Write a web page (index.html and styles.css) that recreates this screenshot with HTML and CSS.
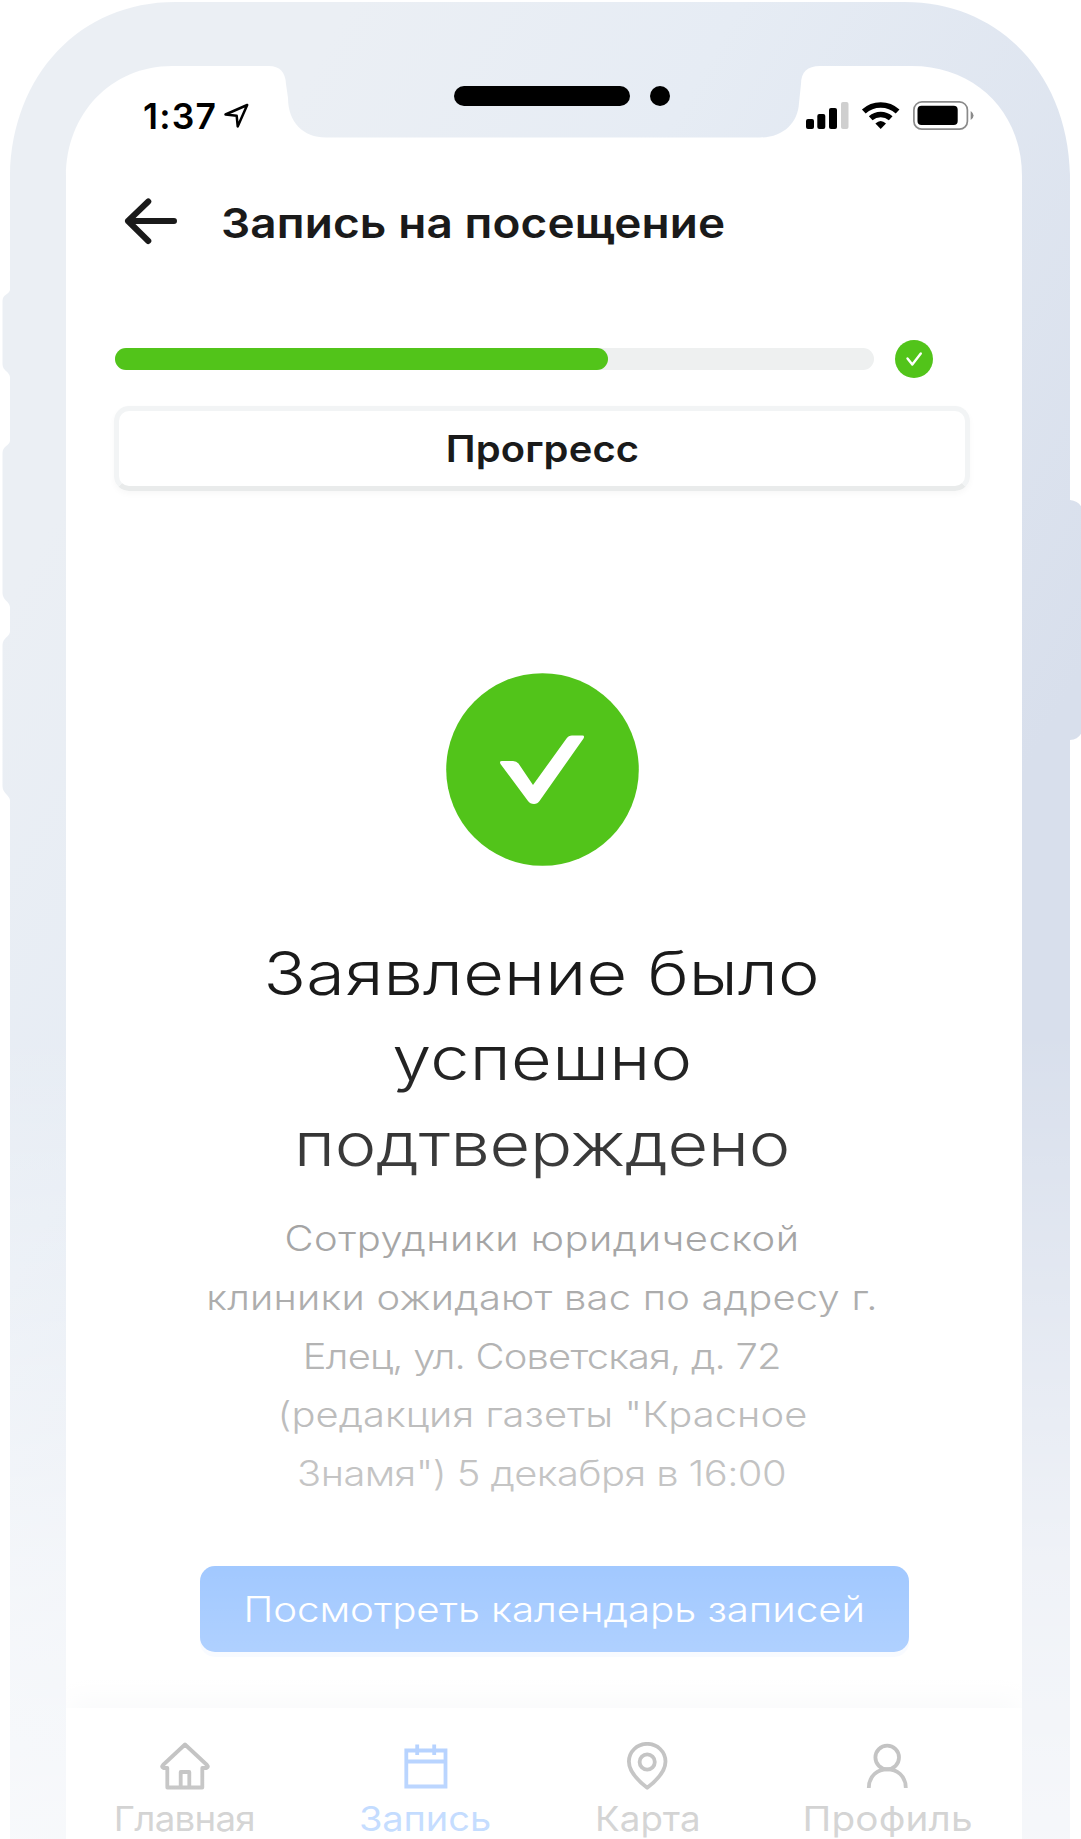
FILE: index.html
```html
<!DOCTYPE html>
<html lang="ru">
<head>
<meta charset="utf-8">
<title>Запись на посещение</title>
<link rel="stylesheet" href="styles.css">
</head>
<body>
<div class="phone">
  <svg class="frame" viewBox="0 0 1081 1839" aria-hidden="true">
    <defs>
      <linearGradient id="metal" gradientUnits="userSpaceOnUse" x1="180" y1="300" x2="1020" y2="780">
        <stop offset="0" stop-color="#ebeff4"/>
        <stop offset=".35" stop-color="#e6ecf4"/>
        <stop offset="1" stop-color="#d8dfec"/>
      </linearGradient>
    </defs>
    <path fill="url(#metal)" fill-rule="evenodd" d="M10 1839V800C9 795 2.500 793 2.500 786V645C2.500 638 9 637 10 632V607C9 601 2.500 600 2.500 593V453C2.500 446 9 446 10 441V377C9 371 2.500 371 2.500 364V301C2.500 294 9 295 10 290V175C12 75 80 2 175 2H905C1000 2 1068 75 1070 175V500Q1081 501 1083 512V728Q1081 739 1070 740V1839ZM66 1839H1022V176C1022 112 975 66 912 66H820Q801 66 801 84L799 103C798 123 783 137.500 760 137.500H326C303 137.500 288 122 288 98L286 84Q285 66 269 66H172C111 66 66 114 66 176Z"/>
    <rect x="454" y="86" width="176" height="20" rx="10"/>
    <circle cx="660" cy="96" r="10"/>
  </svg>

  <main class="screen">
    <div class="status">
      <div class="clock">
        <span class="time">1:37</span>
        <svg width="28" height="28" viewBox="222 102 28 28"><path d="M247.200 105 225.500 114.500 236.700 115.800 237.700 126.500Z" fill="none" stroke="#000" stroke-width="2.500" stroke-linejoin="round"/></svg>
      </div>
      <svg width="170" height="32" viewBox="805 100 170 32">
        <rect x="806" y="119" width="8" height="10" rx="2"/>
        <rect x="817.300" y="114" width="8" height="15" rx="2"/>
        <rect x="829" y="108" width="8" height="21" rx="2"/>
        <rect x="841" y="102" width="7.500" height="27" rx="2" fill="#cfcfcf"/>
        <path d="M863.800 111.500A25 25 0 0 1 897.600 111.500M870.700 118.300A15 15 0 0 1 890.700 118.300" fill="none" stroke="#000" stroke-width="5.500"/>
        <path d="M875.400 123.500Q880.700 118.500 886 123.500L880.700 129Z"/>
        <rect x="913.900" y="101.900" width="53.500" height="27.300" rx="8" fill="none" stroke="#8a8a8a" stroke-width="1.700"/>
        <rect x="917.500" y="105.700" width="40.200" height="19.400" rx="4"/>
        <path d="M970.700 111Q976.500 115.500 970.700 120Z" fill="#8a8a8a"/>
      </svg>
    </div>

    <header class="header">
      <svg width="54" height="50" viewBox="124 195 54 50"><path d="M174 220H128M148.300 200.500 128 220 148.300 240" fill="none" stroke="#1a1a1a" stroke-width="6" stroke-linecap="round" stroke-linejoin="round"/></svg>
      <h1 class="title"><span class="fit f-title">Запись на посещение</span></h1>
    </header>

    <div class="progress">
      <div class="track"><div class="bar" style="width:65%"></div></div>
      <svg width="38" height="38" viewBox="895 340 38 38"><circle cx="914" cy="359" r="19" fill="#52c41a"/><path d="M907.500 358.500 912.300 364.500 920.800 353.500" fill="none" stroke="#fff" stroke-width="2.400" stroke-linecap="round" stroke-linejoin="round"/></svg>
    </div>
    <div class="card"><span class="fit f-card">Прогресс</span></div>

    <svg class="success" width="193" height="193" viewBox="446 673 193 193">
      <circle cx="542.500" cy="769.500" r="96.300" fill="#52c41a"/>
      <path fill="#fff" d="M502 761H513Q516.500 761 518.500 763.500L533 785 566.500 738.500Q568.500 735.500 572 735.500H582.500Q585 735.500 583.500 738.500L539.500 801Q537.500 804 534 804 530 804 528 801L500.500 764Q499 761 502 761Z"/>
    </svg>

    <h2 class="result">
      <span class="fit f-r1">Заявление было</span><br>
      <span class="fit f-r2">успешно</span><br>
      <span class="fit f-r3">подтверждено</span>
    </h2>
    <p class="details">
      <span class="fit f-d1">Сотрудники юридической</span><br>
      <span class="fit f-d2">клиники ожидают вас по адресу г.</span><br>
      <span class="fit f-d3">Елец, ул. Советская, д. 72</span><br>
      <span class="fit f-d4">(редакция газеты "Красное</span><br>
      <span class="fit f-d5">Знамя") 5 декабря в 16:00</span>
    </p>
    <button class="action"><span class="fit f-btn">Посмотреть календарь записей</span></button>

    <nav class="tabs">
      <a class="tab t1">
        <svg width="50" height="50" viewBox="160 1742 50 50"><path d="M167.300 1768H163.500Q161 1767 163 1765L185 1744.500 207 1765Q209 1767 206.500 1768H202.300V1787.500H167.300ZM180.700 1787V1772H189.300V1787"/></svg>
        <span class="fit f-n1">Главная</span>
      </a>
      <a class="tab t2 active">
        <svg width="50" height="50" viewBox="400.500 1742 50 50"><path d="M405.800 1750.500H445V1786.500H405.800ZM405.800 1761.500H445M416.700 1744.500V1755M433.700 1744.500V1755"/></svg>
        <span class="fit f-n2">Запись</span>
      </a>
      <a class="tab t3">
        <svg width="50" height="50" viewBox="622.300 1742 50 50"><path d="M646.500 1787.800C639 1782 628.200 1773 628.200 1761.500A18.300 17.700 0 0 1 664.800 1761.500C664.800 1773 654 1782 646.500 1787.800Z"/><circle cx="646.500" cy="1762" r="7.600"/></svg>
        <span class="fit f-n3">Карта</span>
      </a>
      <a class="tab t4">
        <svg width="50" height="50" viewBox="863 1742 50 50"><circle cx="887.200" cy="1757.500" r="11.800"/><path d="M868.800 1788C868.800 1763 905.800 1763 905.800 1788"/></svg>
        <span class="fit f-n4">Профиль</span>
      </a>
    </nav>
  </main>
  <div class="fade"></div>
</div>
</body>
</html>
```
FILE: styles.css
```css
* { box-sizing: border-box; }
body { margin: 0; background: #fff; font-family: Inter, "Liberation Sans", sans-serif; color: #1a1a1a; }
h1, h2, p { margin: 0; font-weight: 300; }
svg { display: block; flex: none; }

.phone { position: relative; width: 1081px; height: 1839px; overflow: hidden; }
.frame { position: absolute; inset: 0; width: 1081px; height: 1839px; }
.fade { position: absolute; inset: 1030px 0 0; background: linear-gradient(rgba(255,255,255,0), rgba(255,255,255,.6) 66.300%, rgba(255,255,255,.66) 77%, rgba(255,255,255,.76)); pointer-events: none; }

.screen { position: relative; width: 956px; height: 1839px; margin-left: 66px; padding-top: 96px; overflow: hidden; display: flex; flex-direction: column; }
.screen > * { flex: none; }

/* extended letterforms, tracked per line */
.fit { --sx: 1.15; display: inline-block; white-space: nowrap; letter-spacing: var(--ls); margin-right: calc(-1 * var(--ls)); transform: scaleX(var(--sx)); }
.f-title { --sx: 1.12; --ls: .1px; transform-origin: left; }
.f-card { --sx: 1.08; --ls: .1px; }
.f-r1 { --sx: 1.17; --ls: .2px; }
.f-r2 { --sx: 1.17; --ls: .3px; }
.f-r3 { --sx: 1.17; --ls: -.2px; }
.f-d1 { --ls: .45px; }
.f-d2 { --ls: .2px; }
.f-d3 { --ls: -.7px; }
.f-d4 { --ls: .05px; }
.f-d5 { --ls: -.5px; }
.f-btn { --ls: -.05px; }
.f-n1 { --sx: 1.08; --ls: -.7px; }
.f-n2 { --sx: 1.12; --ls: -.1px; }
.f-n3 { --sx: 1.08; --ls: 0px; }
.f-n4 { --sx: 1.14; --ls: .1px; }

.status { height: 40px; padding: 0 47px 0 77px; display: flex; justify-content: space-between; align-items: center; color: #000; }
.clock { display: flex; align-items: center; gap: 4.500px; }
.time { font-size: 35.5px; font-weight: 600; line-height: 40px; letter-spacing: 1.2px; padding-top: 2px; }

.header { height: 60px; margin-top: 57px; padding-left: 58px; display: flex; align-items: center; gap: 43px; }
.header svg { margin-top: -5px; }
.title { font-size: 41px; font-weight: 600; line-height: 60px; }

.progress { margin: 87px 89px 0 48.500px; height: 38px; display: flex; align-items: center; justify-content: space-between; }
.track { width: 759px; height: 22px; border-radius: 11px; background: #eef0f0; }
.bar { height: 22px; border-radius: 11px; background: #52c41a; }
.card { margin: 28px 52px 0 48px; height: 85px; border: 5.500px solid #f2f4f5; border-bottom-color: #e9ebeb; border-radius: 15px; box-shadow: 0 3px 6px rgba(0,0,0,.03); display: flex; align-items: center; justify-content: center; font-size: 37px; font-weight: 600; }

.success { margin: 182px auto 0 380px; }
.result { margin-top: 64.500px; padding-right: 4px; text-align: center; font-size: 60px; line-height: 85.700px; color: #1a1a1a; }
.details { margin-top: 21.500px; padding-right: 4px; text-align: center; font-size: 34.700px; line-height: 58.700px; color: #8a8a8a; }
.action { margin: 63.500px auto 0 134px; padding: 0; width: 709px; height: 86px; border: 0; border-radius: 15px; background: #1677ff; box-shadow: 0 5px 0 rgba(5,90,255,.08); color: #fff; font: 300 35px/86px Inter, "Liberation Sans", sans-serif; }

.tabs { height: 140px; margin-top: 56px; padding: 34px 53px 0 50px; background: #fff; box-shadow: 0 -8px 26px -4px rgba(20,50,90,.1); display: flex; justify-content: space-between; font-size: 34px; color: #555; }
.tab { display: flex; flex-direction: column; align-items: center; gap: 5px; line-height: 44px; }
.tab svg { fill: none; stroke: #303030; stroke-width: 3.800; stroke-linejoin: round; }
.active { color: #1677ff; }
.active svg { stroke: #0567ff; stroke-linejoin: miter; }
.t1 { width: 137px; }
.t2 { width: 127px; }
.t3 { width: 99px; }
.t4 { width: 163px; }
```
